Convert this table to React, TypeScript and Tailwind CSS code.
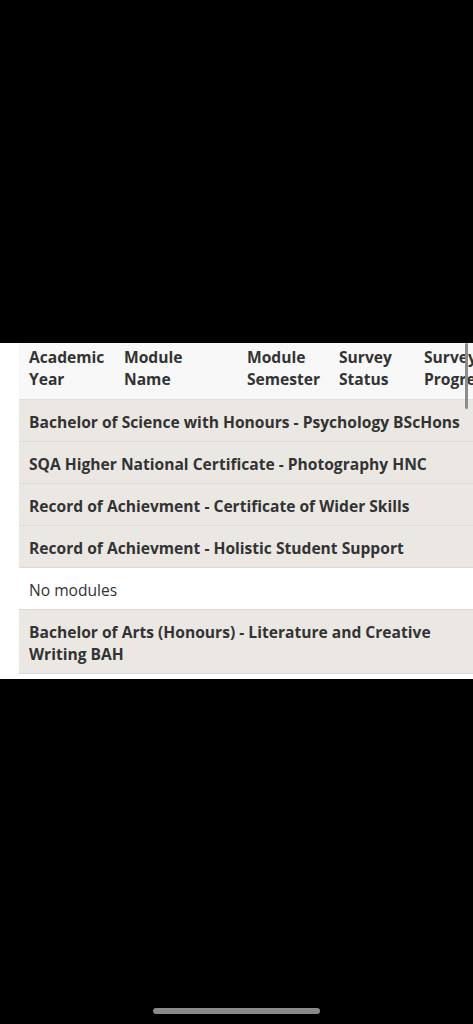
import React from "react";

const rows: { text: string; white?: boolean }[] = [
  { text: "Bachelor of Science with Honours - Psychology BScHons" },
  { text: "SQA Higher National Certificate - Photography HNC" },
  { text: "Record of Achievment - Certificate of Wider Skills" },
  { text: "Record of Achievment - Holistic Student Support" },
  { text: "No modules", white: true },
  { text: "Bachelor of Arts (Honours) - Literature and Creative Writing BAH" },
];

export default function App() {
  return (
    <div
      className="w-[473px] h-[1024px] bg-black flex flex-col overflow-hidden"
      style={{ fontFamily: '"Open Sans", "Liberation Sans", sans-serif' }}
    >
      <div className="h-[343px] shrink-0" />
      <div className="relative bg-white pl-[19px] pb-[5px] overflow-hidden text-[#333333] text-[15.6px] leading-[22px]">
        <div className="w-[454px]">
          <div className="flex bg-[#f8f8f8] border-b border-[#e2e0dd] pt-[3px] pb-[9px] font-bold w-[560px]">
            <div className="w-[95px] pl-[10px] shrink-0">Academic<br />Year</div>
            <div className="w-[123px] pl-[10px] shrink-0">Module<br />Name</div>
            <div className="w-[92px] pl-[10px] shrink-0">Module<br />Semester</div>
            <div className="w-[85px] pl-[10px] shrink-0">Survey<br />Status</div>
            <div className="w-[120px] pl-[10px] shrink-0">Survey<br />Progress</div>
          </div>
          {rows.map((r, i) => (
            <div
              key={i}
              className={`border-b border-[#dedbd7] pt-[11px] pb-[8px] pl-[10px] pr-[8px] ${
                r.white ? "bg-white font-normal" : "bg-[#ebe8e4] font-bold"
              }`}
            >
              {r.text}
            </div>
          ))}
        </div>
        <div className="absolute right-[5px] top-0 w-[3px] h-[66px] rounded-full bg-[#8c8c8c]" />
      </div>
      <div className="flex-1 flex flex-col justify-end items-center pb-[10px]">
        <div className="w-[167px] h-[6px] rounded-full bg-[#8a8a8a]" />
      </div>
    </div>
  );
}
